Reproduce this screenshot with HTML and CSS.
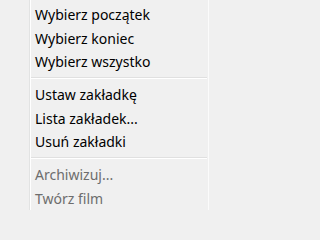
FILE: index.html
```html
<!DOCTYPE html>
<html lang="pl">
<head>
<meta charset="utf-8">
<title>Menu</title>
<link rel="stylesheet" href="styles.css">
</head>
<body>
<div class="menu">
  <div class="item">Wybierz początek</div>
  <div class="item">Wybierz koniec</div>
  <div class="item">Wybierz wszystko</div>
  <div class="sep"></div>
  <div class="item">Ustaw zakładkę</div>
  <div class="item">Lista zakładek...</div>
  <div class="item">Usuń zakładki</div>
  <div class="sep"></div>
  <div class="item disabled">Archiwizuj...</div>
  <div class="item disabled">Twórz film</div>
</div>
</body>
</html>
```
FILE: styles.css
```css
html, body {
  margin: 0;
  padding: 0;
  background: #f0f0f0;
}
.menu {
  box-sizing: border-box;
  width: 209px;
  height: 210px;
  padding-top: 3px;
  border-right: 1px solid #fbfbfb;
  background: linear-gradient(to right, #f0f0f0 29px, #e2e3e3 29px 30px, #ffffff 30px 31px, #f0f0f0 31px);
  font-family: "Noto Sans", "Open Sans", sans-serif;
  font-size: 14px;
  color: #000;
  display: flex;
  flex-direction: column;
}
.item {
  height: 23.5px;
  line-height: 23.5px;
  padding-left: 35px;
  white-space: nowrap;
}
.item.disabled {
  color: #6d6d6d;
}
.sep {
  height: 10.5px;
  margin: 0 1px 0 31px;
  display: flex;
  flex-direction: column;
  justify-content: center;
}
.sep::before {
  content: "";
  display: block;
  height: 1px;
  background: #e0e0e0;
  border-bottom: 1px solid #ffffff;
}
```
